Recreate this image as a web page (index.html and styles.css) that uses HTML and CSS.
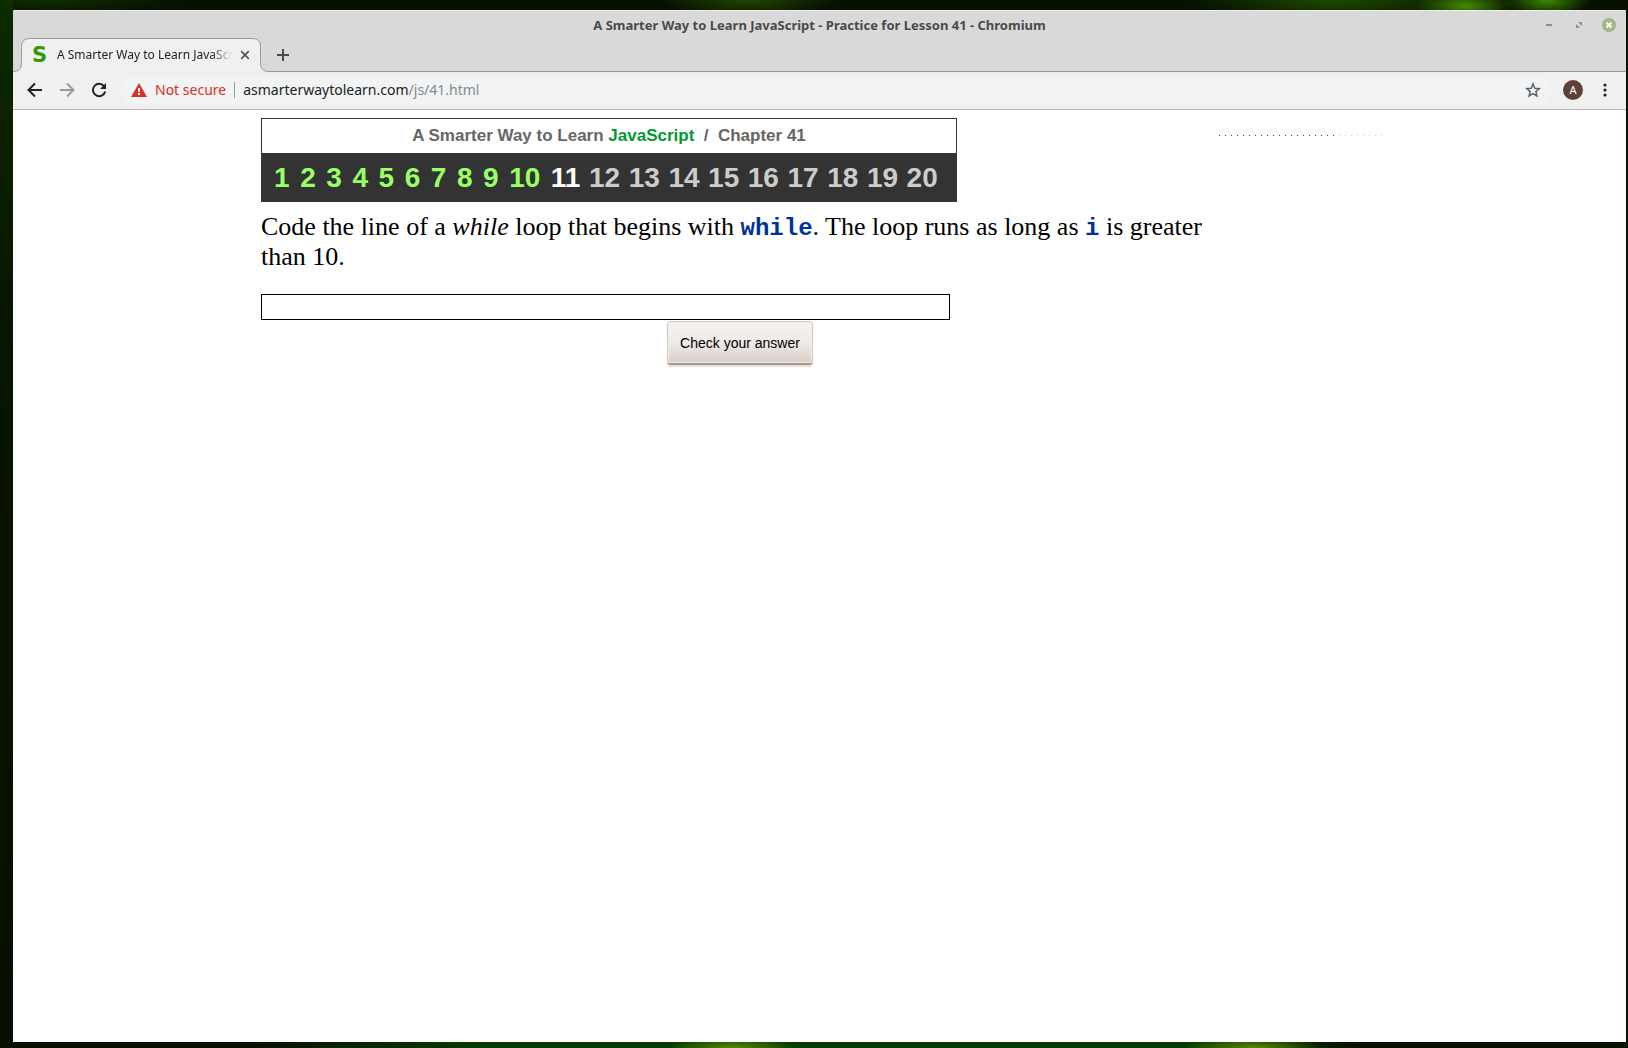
FILE: index.html
```html
<!DOCTYPE html>
<html lang="en">
<head>
<meta charset="utf-8">
<title>A Smarter Way to Learn JavaScript - Practice for Lesson 41</title>
<link rel="stylesheet" href="styles.css">
</head>
<body class="desktop">
<div class="window">
  <header class="titlebar">
    <div class="window-title">A Smarter Way to Learn JavaScript - Practice for Lesson 41 - Chromium</div>
    <div class="window-controls">
      <button class="control" aria-label="Minimize"><svg width="14" height="14" viewBox="0 0 14 14"><path d="M4 6h6v2H4z" fill="#8f8f8f"/></svg></button>
      <button class="control" aria-label="Restore"><svg width="14" height="14" viewBox="0 0 14 14"><path d="M6 4h4v4zM4 6v4h4z" fill="#8f8f8f"/></svg></button>
      <button class="control" aria-label="Close"><svg width="14" height="14" viewBox="0 0 14 14"><circle cx="7" cy="7" r="7" fill="#9cb97f"/><path d="M4.500 4.500l5 5M9.500 4.500l-5 5" stroke="#fff" stroke-width="2"/></svg></button>
    </div>
  </header>
  <div class="tabs">
    <div class="tab">
      <svg class="tab-shape" width="256" height="34" viewBox="0 0 256 34" aria-hidden="true"><path d="M0 34v-1h1Q8.500 33 8.500 25.500V8.500Q8.500 .5 16.500 .5H239.500Q247.500 .5 247.500 8.500V25.500Q247.500 33 255 33.500V34z" fill="#f0f0f0"/><path d="M0 33.500Q8.500 33.500 8.500 25.500V8.500Q8.500 .5 16.500 .5H239.500Q247.500 .5 247.500 8.500V25.500Q247.500 33.500 255.500 33.500" fill="none" stroke="#999"/></svg>
      <span class="favicon">S</span>
      <span class="tab-title">A Smarter Way to Learn JavaScript</span>
      <button class="tab-close" aria-label="Close tab"><svg width="10" height="10" viewBox="0 0 10 10"><path d="M1.200 1.200l7.600 7.600M8.800 1.200l-7.600 7.600" stroke="#555" stroke-width="1.700"/></svg></button>
    </div>
    <button class="new-tab" aria-label="New tab"><svg width="12" height="12" viewBox="0 0 12 12"><path d="M6 0v12M0 6h12" stroke="#4a4a4a" stroke-width="2"/></svg></button>
  </div>
  <nav class="toolbar">
    <button class="tool" aria-label="Back"><svg width="16" height="16" viewBox="0 0 16 16"><path d="M15 8H2M8 1.500L1.500 8 8 14.500" fill="none" stroke="#222" stroke-width="2"/></svg></button>
    <button class="tool" aria-label="Forward"><svg width="16" height="16" viewBox="0 0 16 16"><path d="M1 8h13M8 1.500L14.500 8 8 14.500" fill="none" stroke="#999" stroke-width="2"/></svg></button>
    <button class="tool" aria-label="Reload"><svg width="16" height="16" viewBox="0 0 16 16"><path d="M13.300 4.500A6.200 6.200 0 1 0 14.200 9.500" fill="none" stroke="#222" stroke-width="2"/><path d="M15 1v6H9z" fill="#222"/></svg></button>
    <div class="omnibox">
      <svg width="16" height="14" viewBox="0 0 16 14" aria-hidden="true"><path d="M8 0l8 14H0z" fill="#d93025"/><path d="M7 5h2v4H7zM7 10h2v2H7z" fill="#fff"/></svg>
      <span class="insecure">Not secure</span>
      <span class="divider"></span>
      <span class="url">asmarterwaytolearn.com<span class="path">/js/41.html</span></span>
      <button class="star" aria-label="Bookmark"><svg width="16" height="16" viewBox="0 0 16 16"><path d="M8 2l1.800 4.200 4.500.4-3.400 3 1 4.400L8 11.700 4.100 14l1-4.400-3.400-3 4.500-.4z" fill="none" stroke="#5f6368" stroke-width="1.500"/></svg></button>
    </div>
    <button class="avatar" aria-label="Profile">A</button>
    <button class="tool menu" aria-label="Menu"><svg width="4" height="14" viewBox="0 0 4 14"><g fill="#222"><circle cx="2" cy="2" r="1.600"/><circle cx="2" cy="7" r="1.600"/><circle cx="2" cy="12" r="1.600"/></g></svg></button>
  </nav>
  <main class="page">
    <section class="lesson">
      <div class="banner">
        <h1 class="heading">A Smarter Way to Learn <span class="subject">JavaScript</span> &nbsp;/&nbsp; Chapter 41</h1>
        <ol class="steps">
          <li class="done">1</li><li class="done">2</li><li class="done">3</li><li class="done">4</li><li class="done">5</li><li class="done">6</li><li class="done">7</li><li class="done">8</li><li class="done">9</li><li class="done">10</li><li class="current">11</li><li>12</li><li>13</li><li>14</li><li>15</li><li>16</li><li>17</li><li>18</li><li>19</li><li>20</li>
        </ol>
      </div>
      <label class="question" for="answer">Code the line of a <em>while</em> loop that begins with <code>while</code>. The loop runs as long as <code>i</code> is greater than 10.</label>
      <input class="answer" id="answer" type="text">
      <button class="check">Check your answer</button>
    </section>
    <div class="dots"></div>
  </main>
</div>
</body>
</html>
```
FILE: styles.css
```css
* { box-sizing: border-box; }
button { border: 0; padding: 0; background: none; font: inherit; color: inherit; }
svg { display: block; }

.desktop {
  margin: 0;
  min-height: 100vh;
  display: flex;
  padding: 10px 2px 6px 13px;
  font-family: "Noto Sans", sans-serif;
  background:
    radial-gradient(ellipse 90px 18px at 46% 0, #214500, transparent),
    radial-gradient(ellipse 50px 18px at 90% 6px, #408c00, transparent),
    radial-gradient(ellipse 44px 18px at 95% 0, #3c8a00, transparent),
    radial-gradient(ellipse 150px 24px at 82% 0, #1c4a00, transparent),
    radial-gradient(ellipse 140px 16px at 3% 0, #0f2e00, transparent),
    radial-gradient(ellipse 65px 12px at 45% 100%, #558a00, transparent),
    radial-gradient(ellipse 70px 12px at 77% 100%, #558a00, transparent),
    linear-gradient(90deg, transparent 15%, #063d00 30%, #063d00 75%, transparent 84%) 0 100% / 100% 6px no-repeat,
    linear-gradient(#0c2a00, #081500 30%, #061000) 0 0 / 13px 100% no-repeat,
    #061100;
}
.window {
  flex: 1;
  min-width: 0;
  display: flex;
  flex-direction: column;
  background: #fff;
  border-radius: 2px 2px 0 0;
  overflow: hidden;
}
.titlebar {
  display: grid;
  grid-template-columns: 1fr auto 1fr;
  align-items: center;
  height: 28px;
  padding: 0 10px;
  background: #d9d9d9;
  border-top: 1px solid #eee;
}
.window-title { grid-column: 2; font-size: 13px; line-height: 20px; font-weight: 700; color: #4a4a4a; }
.window-controls { display: flex; justify-content: flex-end; gap: 16px; }
.tabs { display: flex; height: 34px; background: linear-gradient(#999, #999) 0 100% / 100% 1px no-repeat #d9d9d9; }
.tab { position: relative; display: flex; align-items: center; width: 256px; padding: 0 19px; }
.tab-shape { position: absolute; inset: 0; }
.favicon, .tab-title, .tab-close { position: relative; }
.favicon { width: 25px; font: 700 21px/32px "DejaVu Sans", sans-serif; color: #390; }
.tab-title {
  width: 176px;
  overflow: hidden;
  white-space: nowrap;
  font-size: 12px;
  line-height: 20px;
  color: #222;
  -webkit-mask-image: linear-gradient(90deg, #000 88%, transparent);
  mask-image: linear-gradient(90deg, #000 88%, transparent);
}
.tab-close { margin-left: 8px; }
.new-tab { padding: 0 8px; }
.toolbar {
  display: flex;
  align-items: center;
  gap: 16px;
  height: 38px;
  padding: 0 17px 2px 14px;
  background: #f0f0f0;
  border-bottom: 1px solid #b8b8b8;
}
.tool { flex: none; }
.omnibox {
  flex: 1;
  display: flex;
  align-items: center;
  gap: 8px;
  height: 28px;
  margin: 0 -4px 0 -2px;
  padding: 0 10px;
  border-radius: 14px;
  background: #f1f3f4;
  font-size: 14px;
  line-height: 20px;
}
.insecure { color: #d93025; }
.divider { width: 1px; height: 16px; background: #999; }
.url { flex: 1; color: #222; }
.path { color: #868b90; }
.avatar { width: 20px; height: 20px; border-radius: 50%; background: #5d4037; color: #fff; font-size: 11px; line-height: 20px; }
.menu { padding: 0 2px 0 4px; }

.page { flex: 1; display: flex; align-items: flex-start; padding: 8px 0 0 248px; }
.lesson { width: 957px; display: flex; flex-direction: column; align-items: flex-start; }
.banner { width: 696px; border: 1px solid #333; background: #333; font-family: "Liberation Sans", sans-serif; font-weight: 700; }
.heading { margin: 0; background: #fff; color: #666; text-align: center; font-size: 17px; line-height: 34px; }
.subject { color: #093; }
.steps { display: flex; justify-content: space-between; margin: 0; padding: 2px 18px 0 12px; list-style: none; font-size: 28px; line-height: 46px; color: #ccc; }
.done { margin-right: 2px; color: #9f6; }
.current { color: #fff; }
.question { margin-top: 10px; font: 26px/30px "Liberation Serif", serif; color: #000; }
.question code { font: 700 24px/24px "Liberation Mono", monospace; color: #039; }
.answer { width: 689px; height: 26px; margin-top: 22px; border: 1px solid #000; padding: 0 4px; font-size: 18px; }
.check {
  width: 146px;
  height: 44px;
  margin: 1px 0 0 406px;
  border: 1px solid #cfc8c2;
  border-bottom: 2px solid #a3988e;
  border-radius: 4px;
  background: linear-gradient(#f5f3f1, #eeeae7 50%, #d9cec4);
  box-shadow: inset 0 0 0 1px #f5efea, 0 2px 1px #e5dfda;
  font: 14px/20px "Liberation Sans", sans-serif;
  color: #000;
}
.dots {
  width: 166px;
  height: 1px;
  margin: 17px 0 0 1px;
  background:
    linear-gradient(90deg, transparent 70%, #fffb 70%),
    repeating-linear-gradient(90deg, #444 0 1px, transparent 1px 6px);
}
```
